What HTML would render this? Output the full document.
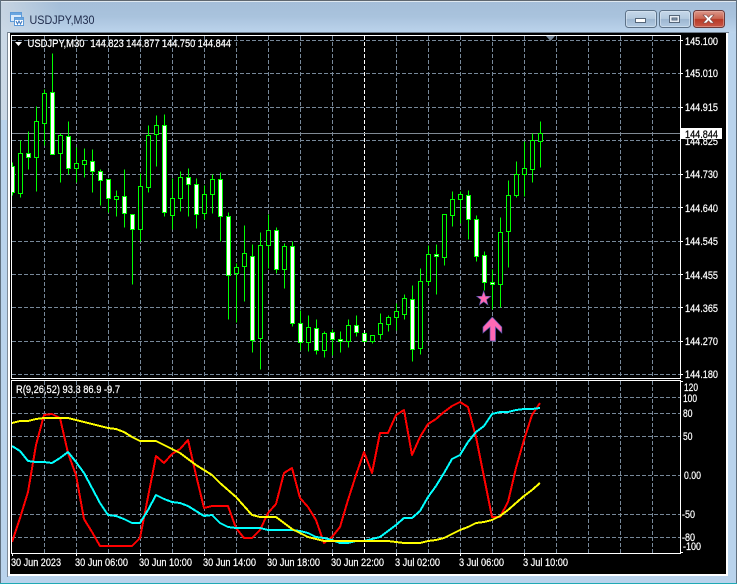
<!DOCTYPE html>
<html>
<head>
<meta charset="utf-8">
<title>USDJPY,M30</title>
<style>
html,body{margin:0;padding:0;width:737px;height:584px;overflow:hidden;background:#b9d3ec}
svg{display:block}
text{font-family:"Liberation Sans",sans-serif;font-size:11px;fill:#fff;stroke:#fff;stroke-width:.22px}
.g{fill:none;stroke:#778899;stroke-width:1;stroke-dasharray:4 2;shape-rendering:crispEdges}
.c{shape-rendering:crispEdges;stroke:#0f0;stroke-width:1}
.l{fill:none;stroke-width:2;stroke-linejoin:round;shape-rendering:crispEdges}
</style>
</head>
<body>
<svg width="737" height="584" viewBox="0 0 737 584" xmlns="http://www.w3.org/2000/svg">
<defs>
<linearGradient id="tb" x1="0" y1="0" x2="0" y2="1"><stop offset="0" stop-color="#a4bdd8"/><stop offset=".5" stop-color="#a9c3dd"/><stop offset="1" stop-color="#bcd4ec"/></linearGradient>
<linearGradient id="tl" x1="0" y1="0" x2="1" y2="0"><stop offset="0" stop-color="#d2dbe4" stop-opacity=".75"/><stop offset="1" stop-color="#d2dbe4" stop-opacity="0"/></linearGradient>
<linearGradient id="bn" x1="0" y1="0" x2="0" y2="1"><stop offset="0" stop-color="#c6d8ea"/><stop offset=".48" stop-color="#b4cadf"/><stop offset=".52" stop-color="#9db6d0"/><stop offset="1" stop-color="#b4cce3"/></linearGradient>
<linearGradient id="bc" x1="0" y1="0" x2="0" y2="1"><stop offset="0" stop-color="#dd9a8e"/><stop offset=".48" stop-color="#c9644f"/><stop offset=".52" stop-color="#b83a26"/><stop offset="1" stop-color="#c9594a"/></linearGradient>
<clipPath id="mc"><rect x="12" y="36" width="668" height="342"/></clipPath>
</defs>

<!-- window frame -->
<rect width="737" height="584" fill="#b9d3ec"/>
<rect x="0" y="0" width="737" height="33" fill="url(#tb)"/>
<rect x="0" y="0" width="60" height="120" fill="url(#tl)"/>
<rect x="0" y="0" width="737" height="1" fill="#5f6770"/>
<rect x="0" y="1" width="737" height="1" fill="#dfe8f0"/>
<rect x="0" y="0" width="1" height="584" fill="#5f7080"/>
<rect x="736" y="0" width="1" height="584" fill="#5f7080"/>
<rect x="0" y="583" width="737" height="1" fill="#1fa9b4"/>

<!-- title icon -->
<g shape-rendering="crispEdges">
<rect x="10.5" y="12.5" width="11" height="9" fill="#dbeafa" stroke="#5d9ad8"/>
<rect x="11" y="13" width="10" height="2" fill="#6aa6e0"/>
<rect x="14.5" y="17.5" width="9" height="8" fill="#fff" stroke="#5d9ad8"/>
<rect x="15" y="18" width="8" height="2" fill="#6aa6e0"/>
</g>
<path d="M16 21l1.5 3 1.5-3 1.5 3 1.5-3" fill="none" stroke="#3c78c0" stroke-width="1"/>
<text x="29.5" y="24" textLength="65" lengthAdjust="spacingAndGlyphs" style="font-size:12px;fill:#1e2a4a;stroke:none">USDJPY,M30</text>

<!-- buttons -->
<rect x="625.5" y="10.5" width="31" height="17" rx="3" fill="url(#bn)" stroke="#5d7288"/>
<rect x="626.5" y="11.5" width="29" height="15" rx="2" fill="none" stroke="#dce8f3" stroke-opacity=".6"/>
<rect x="635.5" y="18.5" width="10" height="4" fill="#fff" stroke="#56677a"/>
<rect x="659.5" y="10.5" width="31" height="17" rx="3" fill="url(#bn)" stroke="#5d7288"/>
<rect x="660.5" y="11.5" width="29" height="15" rx="2" fill="none" stroke="#dce8f3" stroke-opacity=".6"/>
<rect x="669.5" y="15.5" width="10" height="7" fill="#e8eef5" stroke="#56677a"/>
<rect x="672" y="18" width="5" height="2" fill="#8fa6bd" stroke="#56677a" stroke-width="1"/>
<rect x="693.5" y="10.5" width="31" height="17" rx="3" fill="url(#bc)" stroke="#6b3a3a"/>
<rect x="694.5" y="11.5" width="29" height="15" rx="2" fill="none" stroke="#eab7ac" stroke-opacity=".5"/>
<path d="M703 15h3.500l2 2.300 2-2.300h3.500l-3.700 4 3.700 4h-3.500l-2-2.300-2 2.300h-3.500l3.700-4z" fill="#fff" stroke="#7a4a48" stroke-width=".6"/>

<!-- client -->
<rect x="7" y="32" width="722" height="1" fill="#6f7d8c"/>
<rect x="7" y="32" width="1" height="545" fill="#7d8a98"/>
<rect x="8" y="33" width="720" height="543" fill="#fff"/>
<rect x="10" y="33" width="716" height="541" fill="#000"/>

<!-- grid main -->
<path class="g" d="M12 40.500H680M12 73.500H680M12 107.500H680M12 140.500H680M12 174.500H680M12 207.500H680M12 241.500H680M12 274.500H680M12 307.500H680M12 341.500H680M12 374.500H680"/>
<path class="g" d="M44.500 36V378M76.500 36V378M108.500 36V378M140.500 36V378M172.500 36V378M204.500 36V378M236.500 36V378M268.500 36V378M300.500 36V378M332.500 36V378M396.500 36V378M428.500 36V378M460.500 36V378M492.500 36V378M524.500 36V378M556.500 36V378M588.500 36V378M620.500 36V378M652.500 36V378"/>
<path class="g" style="stroke:#fff" d="M364.500 36V378"/>

<!-- grid sub -->
<path class="g" d="M12 397.500H680M12 413.500H680M12 436.500H680M12 475.500H680M12 514.500H680M12 537.500H680"/>
<path class="g" d="M44.500 381V553M76.500 381V553M108.500 381V553M140.500 381V553M172.500 381V553M204.500 381V553M236.500 381V553M268.500 381V553M300.500 381V553M332.500 381V553M396.500 381V553M428.500 381V553M460.500 381V553M492.500 381V553M524.500 381V553M556.500 381V553M588.500 381V553M620.500 381V553M652.500 381V553"/>
<path class="g" style="stroke:#fff" d="M364.500 381V553"/>

<!-- price line -->
<rect x="12" y="133" width="668" height="1" fill="#808a94"/>

<!-- candles -->
<g clip-path="url(#mc)"><g transform="translate(.5 .5)">
<path class="c" fill="none" d="M12 162V195M20 140V197M28 131V169M36 106V191M44 89V145M52 53V154M60 133V182M68 121V174M76 147V182M84 148V177M92 149V192M100 169V205M108 179V212M116 190V216M124 169V227M132 214V284M140 173V241M148 125V192M156 115V166M164 114V216M172 178V229M180 171V211M188 168V216M196 178V228M204 185V219M212 174V213M220 172V241M228 212V319M236 263V322M244 225V301M252 244V352M260 232V369M268 214V268M276 227V273M284 243V288M292 241V326M300 310V350M308 315V351M316 319V354M324 331V357M332 329V355M340 331V352M348 319V347M356 315V336M372 335V343M380 313V339M388 315V331M396 303V330M404 294V319M412 285V361M420 268V354M428 245V285M436 244V294M444 214V265M452 191V226M460 191V223M468 190V239M476 215V261M484 251V290M492 269V309M500 217V307M508 180V267M516 161V197M524 141V196M532 133V182M540 121V167"/>
<path class="c" fill="#000" d="M18 153h4v40h-4zM34 121h4v36h-4zM42 93h4v30h-4zM58 135h4v18h-4zM74 163h4v5h-4zM82 160h4v4h-4zM114 196h4v3h-4zM138 186h4v43h-4zM146 135h4v52h-4zM154 125h4v9h-4zM170 198h4v17h-4zM178 177h4v21h-4zM202 194h4v19h-4zM210 179h4v15h-4zM234 267h4v6h-4zM242 253h4v13h-4zM258 245h4v93h-4zM266 230h4v15h-4zM282 246h4v23h-4zM306 327h4v15h-4zM322 333h4v17h-4zM346 325h4v16h-4zM370 335h4v6h-4zM378 323h4v11h-4zM386 317h4v7h-4zM394 311h4v6h-4zM402 298h4v16h-4zM418 281h4v67h-4zM426 254h4v27h-4zM442 214h4v43h-4zM450 199h4v16h-4zM458 194h4v5h-4zM498 232h4v52h-4zM506 195h4v36h-4zM514 174h4v21h-4zM522 168h4v6h-4zM530 140h4v29h-4zM538 133h4v8h-4z"/>
<path class="c" fill="#fff" d="M10 166h4v26h-4zM26 153h4v4h-4zM50 92h4v62h-4zM66 136h4v32h-4zM90 161h4v10h-4zM98 171h4v9h-4zM106 179h4v19h-4zM122 196h4v17h-4zM130 214h4v15h-4zM162 125h4v87h-4zM186 177h4v7h-4zM194 184h4v30h-4zM218 179h4v37h-4zM226 216h4v59h-4zM250 256h4v84h-4zM274 230h4v39h-4zM290 246h4v77h-4zM298 323h4v19h-4zM314 328h4v22h-4zM330 332h4v7h-4zM338 339h4v2h-4zM354 325h4v7h-4zM362 333h4v8h-4zM410 299h4v50h-4zM434 254h4v2h-4zM466 195h4v24h-4zM474 219h4v37h-4zM482 255h4v27h-4zM490 282h4v2h-4z"/>
</g></g>

<!-- star & arrow -->
<polygon points="483.700,291 485.500,296.300 490.700,296.300 486.500,299.600 488,305 483.700,301.700 479.400,305 480.900,299.600 476.700,296.300 481.900,296.300" fill="#ff69b4" stroke="#5a55b0" stroke-width=".6"/>
<polygon points="492.300,317 501.800,327 501.800,333 495.500,327 495.500,341 490,341 490,327 483,333 483,327" fill="#ff69b4" stroke="#5a55b0" stroke-width=".7"/>

<!-- indicator lines -->
<polyline class="l" stroke="#f00" points="12,542 20,518 28,492 36,445 44,415 52,414 60,418 68,453 76,475 84,519 92,532 100,546 108,546 116,546 124,546 132,546 140,538 148,497 156,456 164,463 172,454 180,449 188,440 196,475 204,508 212,506 220,506 228,506 236,528 244,538 252,538 260,530 268,513 276,504 284,473 292,468 300,498 308,507 316,520 324,543 332,537 340,527 348,500 356,475 364,452 372,473 380,433 388,433 396,415 404,410 412,455 420,437 428,424 436,419 444,412 452,406 460,402 468,407 476,437 484,477 492,517 500,517 508,502 516,468 524,440 532,415 540,403"/>
<polyline class="l" stroke="#0ff" points="12,446 20,451 28,461 36,462 44,462 52,463 60,458 68,452 76,462 84,473 92,488 100,503 108,515 116,516 124,519 132,523 140,523 148,510 156,495 164,499 172,502 180,503 188,506 196,511 204,516 212,515 220,523 228,527 236,528 244,528 252,528 260,528 268,530 276,530 284,530 292,530 300,531 308,533 316,537 324,538 332,540 340,543 348,543 356,541 364,541 372,539 380,537 388,531 396,525 404,518 412,518 420,511 428,497 436,486 444,473 452,459 460,455 468,442 476,432 484,426 492,414 500,412 508,412 516,410 524,409 532,409 540,408"/>
<polyline class="l" stroke="#ff0" points="12,423 20,421 28,421 36,419 44,418 52,418 60,418 68,418 76,420 84,422 92,424 100,426 108,428 116,429 124,432 132,437 140,441 148,441 156,441 164,445 172,449 180,453 188,459 196,465 204,470 212,475 220,483 228,490 236,497 244,506 252,515 260,517 268,517 276,517 284,523 292,529 300,533 308,537 316,539 324,541 332,541 340,541 348,541 356,541 364,541 372,541 380,541 388,541 396,542 404,543 412,543 420,543 428,541 436,540 444,538 452,534 460,530 468,527 476,523 484,522 492,520 500,516 508,510 516,503 524,496 532,490 540,483"/>

<!-- chart frames -->
<g fill="#fff" shape-rendering="crispEdges">
<rect x="11" y="35" width="670" height="1"/>
<rect x="11" y="35" width="1" height="344"/>
<rect x="680" y="35" width="1" height="344"/>
<rect x="11" y="378" width="670" height="1"/>
<rect x="11" y="380" width="670" height="1"/>
<rect x="11" y="380" width="1" height="174"/>
<rect x="680" y="380" width="1" height="174"/>
<rect x="11" y="553" width="670" height="1"/>
<path d="M12 554h1v2h-1zM76 554h1v2h-1zM140 554h1v2h-1zM204 554h1v2h-1zM268 554h1v2h-1zM332 554h1v2h-1zM396 554h1v2h-1zM460 554h1v2h-1zM524 554h1v2h-1z"/>
<path d="M681 40h2v1h-2zM681 73h2v1h-2zM681 107h2v1h-2zM681 174h2v1h-2zM681 207h2v1h-2zM681 241h2v1h-2zM681 274h2v1h-2zM681 307h2v1h-2zM681 341h2v1h-2zM681 374h2v1h-2z"/>
<path d="M681 381h2v1h-2zM681 552h2v1h-2z"/>
</g>

<!-- grey marker -->
<polygon points="546,36 555,36 550.500,41" fill="#778899"/>
<polygon points="15,42 22,42 18.500,46" fill="#fff"/>

<!-- header text -->
<text x="27.500" y="47" textLength="57" lengthAdjust="spacingAndGlyphs">USDJPY,M30</text>
<text x="90.500" y="47" textLength="140.500" lengthAdjust="spacingAndGlyphs">144.823 144.877 144.750 144.844</text>
<text x="16" y="393" textLength="104" lengthAdjust="spacingAndGlyphs">R(9,26,52) 93.3 86.9 -9.7</text>

<!-- price axis -->
<text x="685" y="45" textLength="33" lengthAdjust="spacingAndGlyphs">145.100</text>
<text x="685" y="77" textLength="33" lengthAdjust="spacingAndGlyphs">145.010</text>
<text x="685" y="111" textLength="33" lengthAdjust="spacingAndGlyphs">144.915</text>
<text x="685" y="145" textLength="33" lengthAdjust="spacingAndGlyphs">144.825</text>
<text x="685" y="178" textLength="33" lengthAdjust="spacingAndGlyphs">144.730</text>
<text x="685" y="212" textLength="33" lengthAdjust="spacingAndGlyphs">144.640</text>
<text x="685" y="245" textLength="33" lengthAdjust="spacingAndGlyphs">144.545</text>
<text x="685" y="279" textLength="33" lengthAdjust="spacingAndGlyphs">144.455</text>
<text x="685" y="312" textLength="33" lengthAdjust="spacingAndGlyphs">144.365</text>
<text x="685" y="345" textLength="33" lengthAdjust="spacingAndGlyphs">144.270</text>
<text x="685" y="378" textLength="33" lengthAdjust="spacingAndGlyphs">144.180</text>
<rect x="681" y="128" width="41" height="11" fill="#fff"/>
<text x="685" y="138" textLength="33" lengthAdjust="spacingAndGlyphs" style="fill:#000;stroke:#000">144.844</text>

<!-- indicator axis -->
<text x="684" y="391" textLength="14" lengthAdjust="spacingAndGlyphs">120</text>
<text x="683" y="402" textLength="14" lengthAdjust="spacingAndGlyphs">100</text>
<text x="683" y="417" textLength="9.500" lengthAdjust="spacingAndGlyphs">80</text>
<text x="683" y="440" textLength="9.500" lengthAdjust="spacingAndGlyphs">50</text>
<text x="684" y="479" textLength="17" lengthAdjust="spacingAndGlyphs">0.00</text>
<text x="682" y="518" textLength="13" lengthAdjust="spacingAndGlyphs">-50</text>
<text x="682" y="541" textLength="13" lengthAdjust="spacingAndGlyphs">-80</text>
<text x="683" y="550" textLength="18" lengthAdjust="spacingAndGlyphs">-100</text>

<!-- time axis -->
<text x="11" y="566" textLength="50" lengthAdjust="spacingAndGlyphs">30 Jun 2023</text>
<text x="75" y="566" textLength="53" lengthAdjust="spacingAndGlyphs">30 Jun 06:00</text>
<text x="139" y="566" textLength="53" lengthAdjust="spacingAndGlyphs">30 Jun 10:00</text>
<text x="203" y="566" textLength="53" lengthAdjust="spacingAndGlyphs">30 Jun 14:00</text>
<text x="267" y="566" textLength="53" lengthAdjust="spacingAndGlyphs">30 Jun 18:00</text>
<text x="331" y="566" textLength="53" lengthAdjust="spacingAndGlyphs">30 Jun 22:00</text>
<text x="395" y="566" textLength="45" lengthAdjust="spacingAndGlyphs">3 Jul 02:00</text>
<text x="459" y="566" textLength="45" lengthAdjust="spacingAndGlyphs">3 Jul 06:00</text>
<text x="523" y="566" textLength="45" lengthAdjust="spacingAndGlyphs">3 Jul 10:00</text>
</svg>
</body>
</html>
